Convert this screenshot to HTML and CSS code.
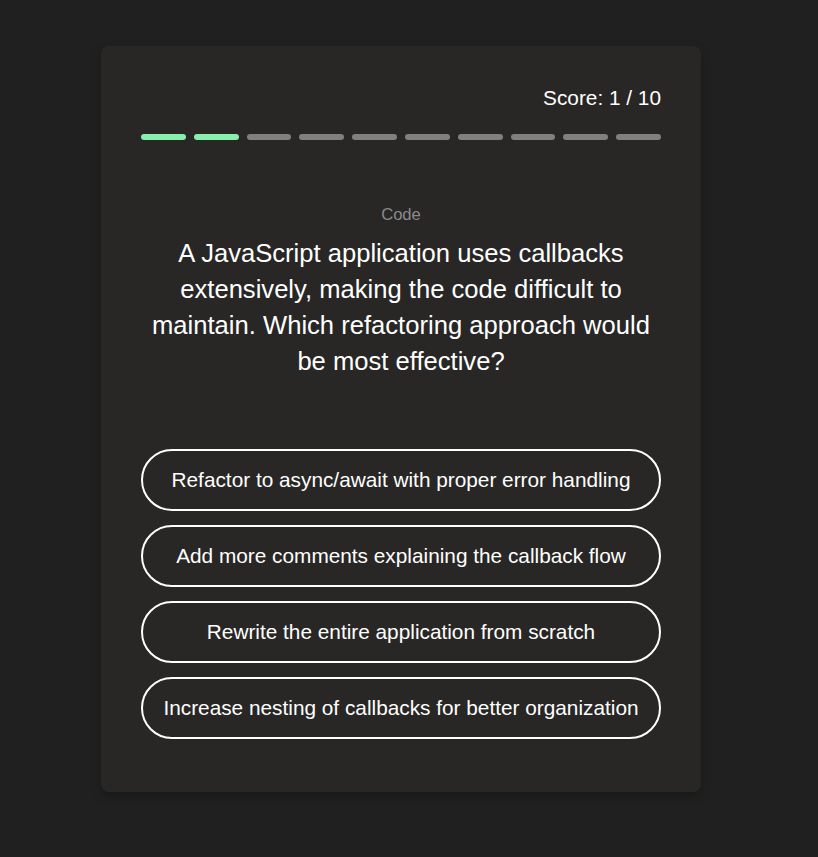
FILE: index.html
```html
<!DOCTYPE html>
<html lang="en">
<head>
<meta charset="utf-8">
<link rel="stylesheet" href="styles.css">
</head>
<body>
<main class="card">
  <div class="score">Score: 1 / 10</div>
  <div class="progress">
    <span class="seg done"></span>
    <span class="seg done"></span>
    <span class="seg"></span>
    <span class="seg"></span>
    <span class="seg"></span>
    <span class="seg"></span>
    <span class="seg"></span>
    <span class="seg"></span>
    <span class="seg"></span>
    <span class="seg"></span>
  </div>
  <div class="category">Code</div>
  <h1 class="question">A JavaScript application uses callbacks extensively, making the code difficult to maintain. Which refactoring approach would be most effective?</h1>
  <div class="options">
    <button class="option">Refactor to async/await with proper error handling</button>
    <button class="option">Add more comments explaining the callback flow</button>
    <button class="option">Rewrite the entire application from scratch</button>
    <button class="option">Increase nesting of callbacks for better organization</button>
  </div>
</main>
</body>
</html>
```
FILE: styles.css
```css
html, body {
  margin: 0;
  padding: 0;
  background: #202020;
  font-family: "Liberation Sans", Arial, sans-serif;
  color: #fff;
}
body {
  padding-top: 46px;
  padding-bottom: 65px;
}
.card {
  width: 600px;
  box-sizing: border-box;
  margin-left: 101px;
  background: #282725;
  border-radius: 8px;
  padding: 40px 40px 53px;
  box-shadow: 0 4px 10px rgba(0,0,0,0.25);
}
.score {
  text-align: right;
  font-size: 20.8px;
  line-height: 24px;
}
.progress {
  display: flex;
  gap: 8px;
  margin-top: 24px;
}
.seg {
  flex: 1;
  height: 6px;
  border-radius: 3px;
  background: #808080;
}
.seg.done {
  background: #86efac;
}
.category {
  margin-top: 66px;
  text-align: center;
  font-size: 16.6px;
  line-height: 18px;
  color: #8a8a8a;
}
.question {
  margin: 11px 0 0;
  text-align: center;
  font-size: 25.6px;
  line-height: 36px;
  font-weight: normal;
}
.options {
  margin-top: 70px;
  display: flex;
  flex-direction: column;
  gap: 14px;
}
.option {
  height: 62px;
  border: 2px solid #fff;
  border-radius: 31px;
  background: transparent;
  color: #fff;
  font-family: "Liberation Sans", Arial, sans-serif;
  font-size: 20.8px;
  padding: 0 16px;
  cursor: pointer;
}
```
